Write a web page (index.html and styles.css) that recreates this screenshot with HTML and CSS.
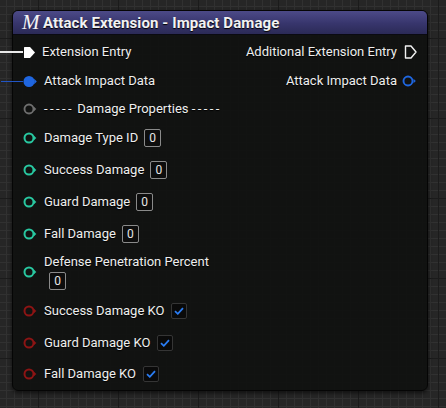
FILE: index.html
```html
<!DOCTYPE html>
<html lang="en">
<head>
    <meta charset="UTF-8">
    <meta name="viewport" content="width=device-width, initial-scale=1.0">
    <title>Attack Extension - Impact Damage</title>
    <link rel="stylesheet" href="styles.css">
</head>
<body>
    <div class="node">
        <div class="node-header">
            <span class="node-icon">M</span>
            <span class="node-title">Attack Extension - Impact Damage</span>
        </div>
        <div class="node-body">
            <div class="row h30">
                <div class="side">
                    <span class="pin pin-exec wire-white">
                        <svg width="13" height="13" viewBox="0 0 13 13"><path d="M1.5 1 H7 L12 6.5 L7 12 H1.5 Q1 12 1 11.5 V1.5 Q1 1 1.5 1 Z" fill="#ffffff"/></svg>
                    </span>
                    <span class="label">Extension Entry</span>
                </div>
                <div class="side">
                    <span class="label">Additional Extension Entry</span>
                    <span class="pin pin-exec-out">
                        <svg width="13" height="14" viewBox="0 0 13 14"><path d="M1.5 1 H7 L12 7 L7 13 H1.5 V1 Z" fill="none" stroke="#f2f2f2" stroke-width="1.4" stroke-linejoin="round"/></svg>
                    </span>
                </div>
            </div>
            <div class="row h28">
                <div class="side">
                    <span class="pin wire-blue">
                        <svg width="15" height="13" viewBox="0 0 15 13"><circle cx="6" cy="6.5" r="5.5" fill="#1f66e0"/><path d="M11.2 3.8 L13.8 6.5 L11.2 9.2 Z" fill="#1f66e0"/></svg>
                    </span>
                    <span class="label">Attack Impact Data</span>
                </div>
                <div class="side">
                    <span class="label">Attack Impact Data</span>
                    <span class="pin pin-out">
                        <svg width="15" height="12" viewBox="0 0 15 12"><circle cx="6" cy="6" r="4.5" fill="none" stroke="#1f66e0" stroke-width="1.9"/><path d="M11.5 3.8 L13.8 6 L11.5 8.2 Z" fill="#1f66e0"/></svg>
                    </span>
                </div>
            </div>
            <div class="row h27">
                <div class="side">
                    <span class="pin">
                        <svg width="15" height="12" viewBox="0 0 15 12"><circle cx="6" cy="6" r="4.5" fill="none" stroke="#6e6e6e" stroke-width="1.9"/><path d="M11 3.8 L13.3 6 L11 8.2 Z" fill="#6e6e6e"/></svg>
                    </span>
                    <span class="label"><span class="dashes">-----</span> Damage Properties <span class="dashes">-----</span></span>
                </div>
            </div>
            <div class="row h32">
                <div class="side">
                    <span class="pin"><svg width="15" height="12" viewBox="0 0 15 12"><circle cx="6" cy="6" r="4.5" fill="none" stroke="#28c7a0" stroke-width="2"/><path d="M11 3.8 L13.3 6 L11 8.2 Z" fill="#28c7a0"/></svg></span>
                    <span class="label">Damage Type ID</span>
                    <span class="value">0</span>
                </div>
            </div>
            <div class="row h32">
                <div class="side">
                    <span class="pin"><svg width="15" height="12" viewBox="0 0 15 12"><circle cx="6" cy="6" r="4.5" fill="none" stroke="#28c7a0" stroke-width="2"/><path d="M11 3.8 L13.3 6 L11 8.2 Z" fill="#28c7a0"/></svg></span>
                    <span class="label">Success Damage</span>
                    <span class="value">0</span>
                </div>
            </div>
            <div class="row h32">
                <div class="side">
                    <span class="pin"><svg width="15" height="12" viewBox="0 0 15 12"><circle cx="6" cy="6" r="4.5" fill="none" stroke="#28c7a0" stroke-width="2"/><path d="M11 3.8 L13.3 6 L11 8.2 Z" fill="#28c7a0"/></svg></span>
                    <span class="label">Guard Damage</span>
                    <span class="value">0</span>
                </div>
            </div>
            <div class="row h31">
                <div class="side">
                    <span class="pin"><svg width="15" height="12" viewBox="0 0 15 12"><circle cx="6" cy="6" r="4.5" fill="none" stroke="#28c7a0" stroke-width="2"/><path d="M11 3.8 L13.3 6 L11 8.2 Z" fill="#28c7a0"/></svg></span>
                    <span class="label">Fall Damage</span>
                    <span class="value">0</span>
                </div>
            </div>
            <div class="row h46">
                <div class="side">
                    <span class="pin"><svg width="15" height="12" viewBox="0 0 15 12"><circle cx="6" cy="6" r="4.5" fill="none" stroke="#28c7a0" stroke-width="2"/><path d="M11 3.8 L13.3 6 L11 8.2 Z" fill="#28c7a0"/></svg></span>
                    <div class="stack">
                        <span class="label">Defense Penetration Percent</span>
                        <span class="value value-under">0</span>
                    </div>
                </div>
            </div>
            <div class="row h32">
                <div class="side">
                    <span class="pin"><svg width="15" height="12" viewBox="0 0 15 12"><circle cx="6" cy="6" r="4.5" fill="none" stroke="#8c1414" stroke-width="2"/><path d="M11 3.8 L13.3 6 L11 8.2 Z" fill="#8c1414"/></svg></span>
                    <span class="label">Success Damage KO</span>
                    <span class="check"><svg width="10" height="8" viewBox="0 0 10 8"><path d="M1 4.2 L3.8 6.8 L9 1.2" fill="none" stroke="#2a7cf2" stroke-width="1.8"/></svg></span>
                </div>
            </div>
            <div class="row h31">
                <div class="side">
                    <span class="pin"><svg width="15" height="12" viewBox="0 0 15 12"><circle cx="6" cy="6" r="4.5" fill="none" stroke="#8c1414" stroke-width="2"/><path d="M11 3.8 L13.3 6 L11 8.2 Z" fill="#8c1414"/></svg></span>
                    <span class="label">Guard Damage KO</span>
                    <span class="check"><svg width="10" height="8" viewBox="0 0 10 8"><path d="M1 4.2 L3.8 6.8 L9 1.2" fill="none" stroke="#2a7cf2" stroke-width="1.8"/></svg></span>
                </div>
            </div>
            <div class="row h32">
                <div class="side">
                    <span class="pin"><svg width="15" height="12" viewBox="0 0 15 12"><circle cx="6" cy="6" r="4.5" fill="none" stroke="#8c1414" stroke-width="2"/><path d="M11 3.8 L13.3 6 L11 8.2 Z" fill="#8c1414"/></svg></span>
                    <span class="label">Fall Damage KO</span>
                    <span class="check"><svg width="10" height="8" viewBox="0 0 10 8"><path d="M1 4.2 L3.8 6.8 L9 1.2" fill="none" stroke="#2a7cf2" stroke-width="1.8"/></svg></span>
                </div>
            </div>
        </div>
    </div>
</body>
</html>
```

FILE: styles.css
```css
html, body {
    height: 100%;
}

body {
    margin: 0;
    padding: 10px 0 0 12px;
    box-sizing: border-box;
    font-family: Roboto, 'Noto Sans', sans-serif;
    color: #f0f0f0;
    background-color: #262626;
    background-image:
        linear-gradient(to right, #1b1b1b 1px, transparent 1px),
        linear-gradient(to bottom, #1b1b1b 1px, transparent 1px),
        linear-gradient(to right, #313131 1px, transparent 1px),
        linear-gradient(to bottom, #313131 1px, transparent 1px);
    background-size: 80px 80px, 80px 80px, 8px 8px, 8px 8px;
    background-position: 38px 38px, 38px 38px, 6px 6px, 6px 6px;
}

.node {
    position: relative;
    width: 416px;
    height: 381px;
    box-sizing: border-box;
    border: 1px solid #050505;
    border-radius: 6px;
    background-color: rgba(16, 17, 16, 0.93);
    box-shadow: 0 2px 4px rgba(0, 0, 0, 0.6);
}

.node-header {
    height: 23px;
    display: flex;
    align-items: center;
    padding-left: 9px;
    border-radius: 5px 5px 0 0;
    background: linear-gradient(to bottom, #4c4a88 0%, #37356c 55%, #2b2a56 100%);
    border-bottom: 1px solid #0a0a12;
}

.node-icon {
    font-family: 'Liberation Serif', serif;
    font-style: italic;
    font-size: 21px;
    color: #f4f4f4;
    width: 18px;
    margin-right: 3px;
    line-height: 1;
}

.node-title {
    font-weight: bold;
    font-size: 15px;
    letter-spacing: 0.1px;
    color: #f2f2f2;
    text-shadow: 0 1px 1px #000;
}

.node-body {
    padding-top: 2px;
}

.row {
    display: flex;
    align-items: center;
    justify-content: space-between;
    padding: 0 10px 0 10px;
}

.h27 { height: 27px; }
.h28 { height: 28px; }
.h30 { height: 30px; }
.h31 { height: 31px; }
.h32 { height: 32px; }
.h46 { height: 46px; }

.side {
    display: flex;
    align-items: center;
}

.pin {
    position: relative;
    display: flex;
    align-items: center;
    margin-right: 6px;
}

.pin-exec {
    margin-right: 6px;
}

.pin-exec-out,
.pin-out {
    margin-right: 0;
    margin-left: 5px;
}

.pin-exec-out {
    margin-left: 7px;
}

/* wires coming into the node from the left */
.wire-white::before,
.wire-blue::before {
    content: "";
    position: absolute;
    right: 100%;
    width: 24px;
    top: 50%;
}

.wire-white::before {
    height: 2px;
    margin-top: -1px;
    background: #e8e8e8;
}

.wire-blue::before {
    width: 22px;
    height: 1px;
    background: #2255c4;
}

.label {
    font-size: 13px;
    line-height: 16px;
    color: #eeeeee;
    text-shadow: 0 1px 1px #000;
    white-space: nowrap;
}

.dashes {
    letter-spacing: 2.4px;
}

.value {
    margin-left: 6px;
    width: 15px;
    height: 16px;
    border: 1px solid #8a8a8a;
    border-radius: 2px;
    background: #0d0d0d;
    font-size: 12px;
    line-height: 16px;
    text-align: center;
    color: #e6e6e6;
}

.stack {
    display: flex;
    flex-direction: column;
    align-items: flex-start;
    margin-top: -1px;
}

.value-under {
    margin-left: 5px;
    margin-top: 2px;
}

.check {
    margin-left: 7px;
    width: 16px;
    height: 16px;
    box-sizing: border-box;
    border: 1px solid #353535;
    border-radius: 2px;
    background: #0a0a0a;
    display: flex;
    align-items: center;
    justify-content: center;
}
```
